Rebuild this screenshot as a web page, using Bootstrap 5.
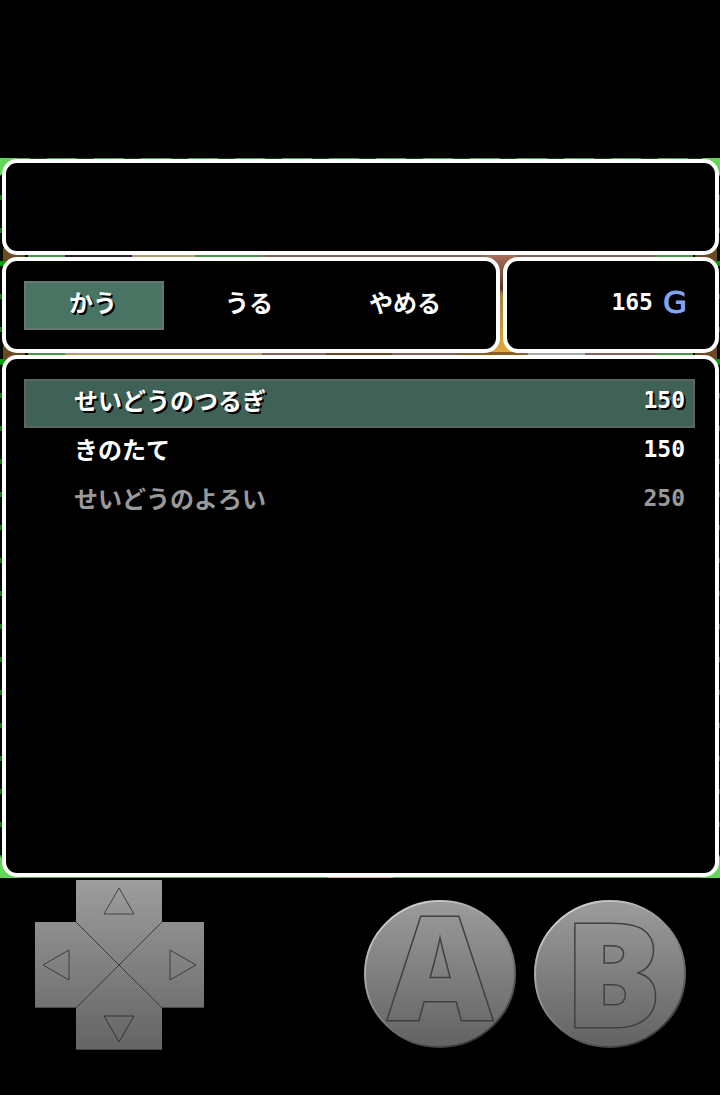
<!DOCTYPE html>
<html lang="ja">
<head>
<meta charset="utf-8">
<meta name="viewport" content="width=device-width, initial-scale=1">
<title>どうぐや</title>
<link href="https://cdn.jsdelivr.net/npm/bootstrap@5.3.0/dist/css/bootstrap.min.css" rel="stylesheet">
<style>
  body { background: #000; color: #fff; font-family: "Noto Sans CJK JP", sans-serif; font-size: 24px; font-weight: 700; line-height: 32px; }
  .game-screen { margin-top: 158px; padding: 1px 1px 1px 2px; gap: 2px; }
  .window { position: relative; background: #000; border: 4px solid #fff; border-radius: 15px; padding: 20px 20px 20px 18px; }
  .window-short { height: 96px; }
  .window-shop { height: 522px; }
  .window-row { display: grid; grid-template-columns: 83fr 36fr; gap: 3px; }
  .choice { flex: 1 1 0; height: 49px; padding: 0 2px 8px 0; border: 2px solid transparent; border-radius: 0; background: transparent; color: #fff; font: inherit; }
  .choice.chosen { background: #497464; border-color: #68776f; }
  .chosen { text-shadow: 2px 2px 0 #000; }
  .money { padding-right: 28px; gap: 10px; padding-bottom: 26px; }
  .digits { font-family: "DejaVu Sans Mono", monospace; font-size: 23px; }
  .coin { font-family: "DejaVu Sans", sans-serif; font-size: 31px; font-weight: 400; color: #83a6f2; -webkit-text-stroke: 1px #83a6f2; }
  .item-row { height: 49px; padding: 0 8px 8px 48px; border: 2px solid transparent; border-radius: 0; background: transparent; color: #fff; font: inherit; }
  .item-row.chosen { background: #406256; border-color: #5b665f; }
  .item-row:disabled { color: #999; }
  .pad-area { padding: 2px 34px 0 35px; }
  .dpad { display: grid; position: relative; grid-template-columns: 41px 86px 42px; grid-template-rows: 42px 86px 42px; }
  .dpad-btn { background: transparent; border: 0; padding: 0; display: flex; align-items: center; justify-content: center; }
  .dpad-up { grid-area: 1 / 2; }
  .dpad-left { grid-area: 2 / 1; }
  .dpad-right { grid-area: 2 / 3; }
  .dpad-down { grid-area: 3 / 2; }
  .round-btns { gap: 18px; padding-top: 20px; }
  .round-btn { background: transparent; border: 0; padding: 0; border-radius: 50%; }
  .round-btn svg { overflow: visible; }
  .round-btn text { font-family: "Open Sans", sans-serif; font-size: 144px; font-weight: 800; fill: url(#disc); stroke: #404040; stroke-width: 3px; paint-order: stroke; }
</style>
</head>
<body>
<main class="game-screen position-relative d-flex flex-column">
  <!-- village map seen between the windows -->
  <svg class="position-absolute top-0 start-0 w-100 h-100" viewBox="0 0 720 720" preserveAspectRatio="none" aria-hidden="true">
    <defs>
      <pattern id="grassTop" width="47" height="4" patternUnits="userSpaceOnUse"><rect width="47" height="4" fill="#123d12"/><rect width="30" height="4" fill="#4c9f4c"/></pattern>
      <pattern id="leaves" width="4" height="33" patternUnits="userSpaceOnUse"><rect width="4" height="33" fill="#030c03"/><rect y="4" width="4" height="5" fill="#0f780f"/></pattern>
      <linearGradient id="post" x2="0" y2="1"><stop offset="0" stop-color="#a96f5b"/><stop offset=".35" stop-color="#5a3528"/><stop offset=".4" stop-color="#a77f35"/><stop offset="1" stop-color="#e0aa3d"/></linearGradient>
    </defs>
    <rect width="720" height="8" fill="url(#grassTop)"/>
    <rect y="4" width="8" height="700" fill="url(#leaves)"/>
    <rect x="712" y="4" width="8" height="700" fill="url(#leaves)"/>
    <path d="M0 0h18L0 18zM702 0h18v18z" fill="#61d657"/>
    <g>
      <path d="M3 90h22v14H3zM3 188h22v14H3zM695 90h22v14h-22zM695 188h22v14h-22z" fill="#6b4922"/>
      <path d="M0 103h5v5H0zM0 201h5v5H0zM715 103h5v5h-5zM715 201h5v5h-5z" fill="#00a000"/>
      <path d="M28 96h37v4H28zM195 96h67v4h-67zM655 96h38v4h-38zM28 194h37v4H28zM655 194h38v4h-38z" fill="#49964a"/>
      <path d="M65 96h67v4H65z" fill="#20232b"/>
      <path d="M132 96h63v4h-63zM65 194h197v4H65z" fill="#b39c72"/>
      <path d="M262 96h393v4H262zM262 194h393v4H262z" fill="#80645d"/>
      <path d="M326 194h66v4h-66z" fill="#674322"/>
      <path d="M458 194h66v4h-66z" fill="#8a5e20"/>
      <path d="M528 194h57v4h-57z" fill="#a6acae"/>
    </g>
    <rect x="486" y="97" width="30" height="97" fill="url(#post)"/>
    <rect y="712" width="720" height="8" fill="#57a554"/>
    <rect x="328" y="712" width="65" height="8" fill="#d8a996"/>
    <path d="M0 698v22h20zM720 698v22h-20z" fill="#61d657"/>
  </svg>

  <section class="window window-short" aria-label="メッセージ"></section>

  <div class="window-row">
    <nav class="window window-short d-flex gap-3" aria-label="コマンド">
      <button type="button" class="choice chosen">かう</button>
      <button type="button" class="choice">うる</button>
      <button type="button" class="choice">やめる</button>
    </nav>
    <section class="window window-short money d-flex justify-content-end align-items-center" aria-label="しょじきん">
      <span class="digits">165</span><span class="coin">G</span>
    </section>
  </div>

  <section class="window window-shop d-flex flex-column" aria-label="しなもの">
    <button type="button" class="item-row chosen d-flex justify-content-between align-items-center"><span>せいどうのつるぎ</span><span class="digits">150</span></button>
    <button type="button" class="item-row d-flex justify-content-between align-items-center"><span>きのたて</span><span class="digits">150</span></button>
    <button type="button" class="item-row d-flex justify-content-between align-items-center" disabled><span>せいどうのよろい</span><span class="digits">250</span></button>
  </section>
</main>

<footer class="pad-area d-flex justify-content-between align-items-start">
  <div class="dpad">
    <svg class="position-absolute top-0 start-0" width="169" height="170" viewBox="0 0 169 170" aria-hidden="true">
      <defs><linearGradient id="cross" x2="0" y2="1"><stop offset="0" stop-color="#9d9d9d"/><stop offset="1" stop-color="#646464"/></linearGradient></defs>
      <path d="M41 0h86v42h42v86h-42v42H41v-42H0V42h41z" fill="url(#cross)"/>
      <path d="M0 127.500h41M127 127.500h42M41 169.500h86" stroke="#484848" fill="none"/>
      <path d="M41 42l86 86M127 42l-86 86" stroke="#3c3c3c" fill="none"/>
    </svg>
    <button type="button" class="dpad-btn dpad-up position-relative" aria-label="上"><svg width="32" height="28" viewBox="0 0 32 28"><path d="M16 1L31 27H1z" fill="none" stroke="#444"/></svg></button>
    <button type="button" class="dpad-btn dpad-left position-relative" aria-label="左"><svg width="28" height="32" viewBox="0 0 28 32"><path d="M1 16L27 1v30z" fill="none" stroke="#3c3c3c"/></svg></button>
    <button type="button" class="dpad-btn dpad-right position-relative" aria-label="右"><svg width="28" height="32" viewBox="0 0 28 32"><path d="M27 16L1 1v30z" fill="none" stroke="#3c3c3c"/></svg></button>
    <button type="button" class="dpad-btn dpad-down position-relative" aria-label="下"><svg width="32" height="28" viewBox="0 0 32 28"><path d="M16 27L31 1H1z" fill="none" stroke="#333"/></svg></button>
  </div>
  <div class="round-btns d-flex">
    <button type="button" class="round-btn">
      <svg class="d-block" width="152" height="148" viewBox="0 0 152 148">
        <defs>
          <linearGradient id="disc" gradientUnits="userSpaceOnUse" x1="0" y1="0" x2="0" y2="148"><stop offset="0" stop-color="#9c9c9c"/><stop offset="1" stop-color="#626262"/></linearGradient>
          <linearGradient id="rim" x1=".2" y1="0" x2=".8" y2="1"><stop offset="0" stop-color="#d8d8d8"/><stop offset=".3" stop-color="#a5a5a5"/><stop offset=".6" stop-color="#777"/><stop offset="1" stop-color="#2c2c2c"/></linearGradient>
        </defs>
        <ellipse cx="76" cy="74" rx="75" ry="73" fill="url(#disc)" stroke="url(#rim)" stroke-width="2"/>
        <text x="76" y="120" text-anchor="middle">A</text>
      </svg>
    </button>
    <button type="button" class="round-btn">
      <svg class="d-block" width="152" height="148" viewBox="0 0 152 148">
        <ellipse cx="76" cy="74" rx="75" ry="73" fill="url(#disc)" stroke="url(#rim)" stroke-width="2"/>
        <text x="79" y="127" text-anchor="middle">B</text>
      </svg>
    </button>
  </div>
</footer>
<script src="https://cdn.jsdelivr.net/npm/bootstrap@5.3.0/dist/js/bootstrap.bundle.min.js"></script>
</body>
</html>
